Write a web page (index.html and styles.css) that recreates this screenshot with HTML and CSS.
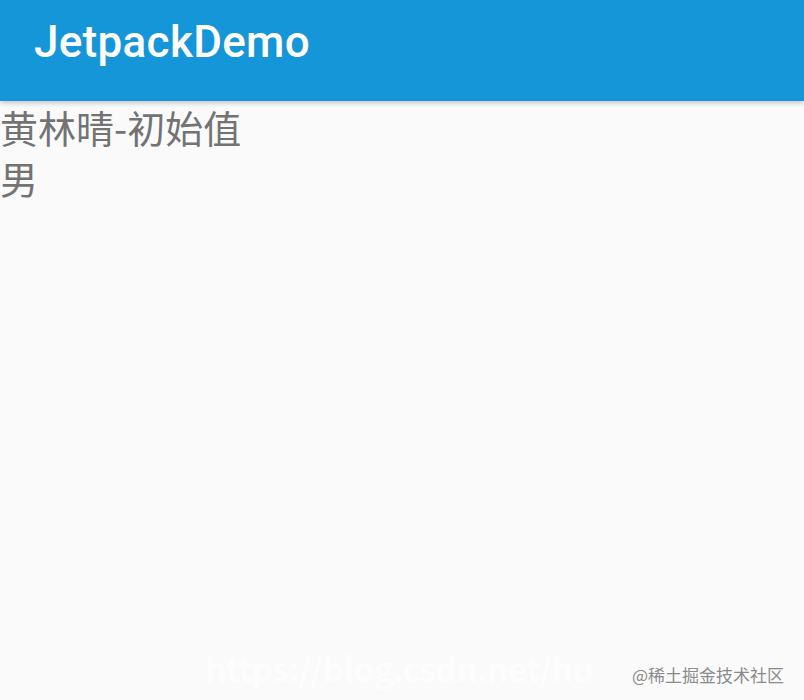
FILE: index.html
```html
<!DOCTYPE html>
<html lang="zh">
<head>
    <meta charset="UTF-8">
    <meta name="viewport" content="width=device-width, initial-scale=1.0">
    <title>JetpackDemo</title>
    <link rel="stylesheet" href="styles.css">
</head>
<body>
    <div class="toolbar">
        <div class="title">JetpackDemo</div>
    </div>
    <div class="content">
        <div class="line">黄林晴-初始值</div>
        <div class="line">男</div>
    </div>
    <div class="watermark">
        <span class="url">https://blog.csdn.net/hu</span>
        <span class="mark">@稀土掘金技术社区</span>
    </div>
</body>
</html>
```

FILE: styles.css
```css
html, body {
    height: 100%;
}
body {
    margin: 0;
    background-color: #fafafa;
    font-family: Roboto, "Noto Sans CJK SC", sans-serif;
    display: flex;
    flex-direction: column;
    overflow: hidden;
}
.toolbar {
    height: 101px;
    background-color: #1596d9;
    box-shadow: 0 2px 5px rgba(0, 0, 0, 0.22);
    display: flex;
    align-items: center;
    padding-left: 34px;
    padding-bottom: 18px;
    box-sizing: border-box;
    position: relative;
    z-index: 1;
}
.title {
    color: #ffffff;
    font-size: 44px;
    font-weight: 500;
    letter-spacing: 0.3px;
}
.content {
    flex: 1;
}
.line {
    font-family: "Noto Sans CJK SC", sans-serif;
    font-size: 38px;
    line-height: 51px;
    color: #737373;
}
.watermark {
    height: 52px;
    display: flex;
    align-items: center;
    justify-content: flex-end;
    padding-right: 20px;
    position: relative;
}
.url {
    position: absolute;
    left: 205px;
    top: 2px;
    font-family: "Noto Sans CJK SC", sans-serif;
    font-size: 34px;
    line-height: 36px;
    font-weight: bold;
    letter-spacing: -1px;
    color: #ffffff;
    opacity: 0.7;
    white-space: nowrap;
}
.mark {
    position: relative;
    font-family: "Noto Sans CJK SC", sans-serif;
    font-size: 17px;
    color: #8a8a8a;
    text-shadow: 0 0 2px #ffffff;
}
```
